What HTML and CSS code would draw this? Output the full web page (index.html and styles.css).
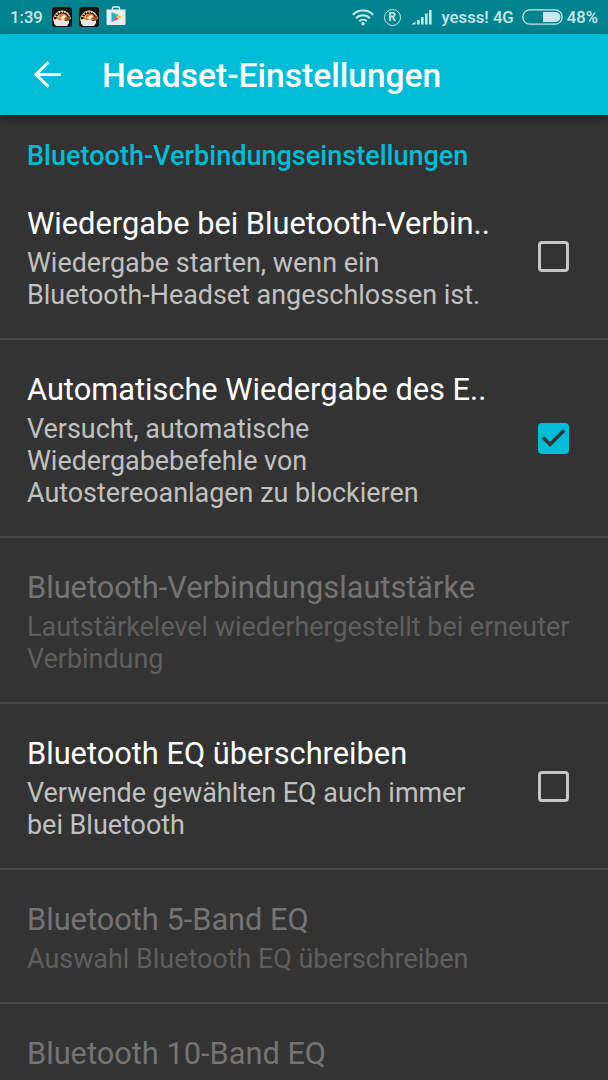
FILE: index.html
```html
<!DOCTYPE html>
<html lang="de">
<head>
  <meta charset="UTF-8">
  <meta name="viewport" content="width=device-width, initial-scale=1.0">
  <title>Headset-Einstellungen</title>
  <link rel="stylesheet" href="styles.css">
</head>
<body>

<svg class="defs" width="0" height="0">
  <symbol id="gauge" viewBox="0 0 20 20">
    <rect width="20" height="20" rx="3" fill="#15110f"/>
    <path d="M1.500 14a8.500 9 0 0 1 17-2" fill="none" stroke="#e0c79a" stroke-width="1"/>
    <path d="M3.500 10a7 6.500 0 0 1 13.500-1" fill="none" stroke="#eee7dc" stroke-width="2" stroke-dasharray="1.300 1.500"/>
    <path d="M4 14c0-5 3-7.500 6.500-7.500S16 9 15.500 12L9 15z" fill="#e97a2c"/>
    <path d="M8 11l4-3 2 1-3 4z" fill="#fff0dc"/>
    <path d="M5 10l2-2v3z" fill="#f9d3ae"/>
    <path d="M2 12.500l3-.5 3 1.500 3-1 3 1.500 3-1v3L15 19H4l-2-2.500z" fill="#e4e8ec"/>
    <path d="M13 11l5-2v4l-3 1z" fill="#8c5737"/>
  </symbol>
</svg>

<header class="status-bar">
  <span class="clock">1:39</span>
  <svg class="app-icon" width="20" height="20"><use href="#gauge"/></svg>
  <svg class="app-icon" width="20" height="20"><use href="#gauge"/></svg>
  <svg class="play-icon" width="20" height="20" viewBox="0 0 20 20">
    <path d="M6.500 4V2q0-1 1-1h5q1 0 1 1v2" fill="none" stroke="#e8eeee" stroke-width="1.400"/>
    <path d="M.5 3.500h19V18q0 1-1 1h-17q-1 0-1-1z" fill="#e8eeee"/>
    <path d="M5.500 6v10l5-5z" fill="#20aee0"/>
    <path d="M5.500 6l5 5 2-2z" fill="#20c58b"/>
    <path d="M5.500 16l5-5 2 2z" fill="#ed4456"/>
    <path d="M10.500 11l2-2 3 2-3 2z" fill="#fbc32c"/>
  </svg>

  <svg class="wifi" width="22" height="17" viewBox="0 0 22 17" fill="none" stroke="#c9e7ea" stroke-width="2">
    <path d="M.8 5.800a14.500 14.500 0 0 1 20.400 0"/>
    <path d="M4 9.200a10 10 0 0 1 14 0"/>
    <path d="M7.200 12.300a5.500 5.500 0 0 1 7.600 0"/>
    <circle cx="11" cy="14.700" r="1.700" fill="#c9e7ea" stroke="none"/>
  </svg>
  <span class="registered">R</span>
  <svg class="signal" width="21" height="16" viewBox="0 0 21 16" fill="#c9e7ea">
    <path d="M0 15.500l4.500-2.700v2.700zM6 11h2.600v4.500H6zM10 8h2.600v7.500H10zM14 4.500h2.600v11H14zM18 1h2.600v14.500H18z"/>
  </svg>
  <span class="carrier">yesss! 4G</span>
  <svg class="battery" width="41" height="16" viewBox="0 0 41 16">
    <rect x=".8" y=".8" width="39.400" height="14.400" rx="7.200" fill="none" stroke="#c9e7ea" stroke-width="1.300"/>
    <path d="M21 3h12.500a5 5 0 0 1 0 10H21z" fill="#c9e7ea"/>
  </svg>
  <span class="percent">48%</span>
</header>

<nav class="toolbar">
  <svg class="back" width="28" height="28" viewBox="0 0 28 28" fill="none" stroke="#fff" stroke-width="3">
    <path d="M28 13.500H3M15.500 1.300L3 13.500l12.500 12.200"/>
  </svg>
  <h1>Headset-Einstellungen</h1>
</nav>

<main class="settings">
  <h2>Bluetooth-Verbindungseinstellungen</h2>

  <section class="item">
    <div class="text">
      <h3>Wiedergabe bei Bluetooth-Verbin..</h3>
      <p>Wiedergabe starten, wenn ein<br>Bluetooth-Headset angeschlossen ist.</p>
    </div>
    <span class="checkbox"></span>
  </section>

  <section class="item">
    <div class="text">
      <h3>Automatische Wiedergabe des E..</h3>
      <p>Versucht, automatische<br>Wiedergabebefehle von<br>Autostereoanlagen zu blockieren</p>
    </div>
    <span class="checkbox checked">
      <svg width="31" height="31" viewBox="0 0 31 31"><path d="M5 14.500l7 7L26 7.500" fill="none" stroke="#333" stroke-width="3.400"/></svg>
    </span>
  </section>

  <section class="item disabled">
    <div class="text">
      <h3>Bluetooth-Verbindungslautstärke</h3>
      <p>Lautstärkelevel wiederhergestellt bei erneuter<br>Verbindung</p>
    </div>
  </section>

  <section class="item">
    <div class="text">
      <h3>Bluetooth EQ überschreiben</h3>
      <p>Verwende gewählten EQ auch immer<br>bei Bluetooth</p>
    </div>
    <span class="checkbox"></span>
  </section>

  <section class="item disabled">
    <div class="text">
      <h3>Bluetooth 5-Band EQ</h3>
      <p>Auswahl Bluetooth EQ überschreiben</p>
    </div>
  </section>

  <section class="item disabled last">
    <div class="text">
      <h3>Bluetooth 10-Band EQ</h3>
    </div>
  </section>
</main>

</body>
</html>
```
FILE: styles.css
```css
* {
  box-sizing: border-box;
}

body {
  margin: 0;
  height: 1080px;
  overflow: hidden;
  display: flex;
  flex-direction: column;
  background-color: #333;
  color: white;
  font-family: Roboto, sans-serif;
}

h1, h2, h3, p {
  margin: 0;
}

.defs {
  display: none;
}

.status-bar {
  display: flex;
  flex: none;
  align-items: center;
  height: 34px;
  padding: 0 10px;
  background-color: #00838f;
  color: #c9e7ea;
  font-size: 16.7px;
  font-weight: 500;
  white-space: nowrap;
}

.clock {
  width: 42px;
}

.app-icon {
  margin-right: 7px;
}

.play-icon {
  margin-top: -2px;
}

.wifi {
  margin-left: auto;
}

.registered {
  width: 17px;
  height: 17px;
  margin-left: 10px;
  border: 1.5px solid #c9e7ea;
  border-radius: 50%;
  font-size: 12px;
  font-weight: 700;
  line-height: 15px;
  text-align: center;
}

.signal {
  margin-left: 10px;
}

.carrier {
  margin-left: 10px;
}

.battery {
  margin-left: 8px;
}

.percent {
  margin-left: 4px;
}

.toolbar {
  display: flex;
  flex: none;
  align-items: center;
  height: 81px;
  padding-left: 33px;
  background-color: #00bcd6;
  box-shadow: 0 3px 9px rgba(0, 0, 0, 0.4);
  z-index: 1;
}

.toolbar h1 {
  margin-left: 41px;
  padding-top: 2px;
  font-size: 33.55px;
  font-weight: 500;
}

.settings h2 {
  height: 59px;
  padding: 25px 27px 0;
  color: #00bcd6;
  font-size: 27.05px;
  font-weight: 500;
  line-height: 32px;
}

.item {
  display: flex;
  align-items: center;
  padding: 32px 39px 27px 27px;
  border-bottom: 2px solid #484848;
}

.last {
  border-bottom: none;
  padding-bottom: 0;
}

.text {
  flex: 1;
  white-space: nowrap;
}

.item h3 {
  margin-bottom: 5px;
  font-size: 30.77px;
  font-weight: 400;
  line-height: 36px;
}

.item p {
  color: #c1c1c1;
  font-size: 26.92px;
  line-height: 32px;
}

.disabled h3 {
  color: #747474;
}

.disabled p {
  color: #5f5f5f;
}

.checkbox {
  width: 31px;
  height: 31px;
  margin-top: -5px;
  border: 3.5px solid #c6c6c6;
  border-radius: 4px;
}

.checked {
  border: none;
  background-color: #00bcd6;
}

.checked svg {
  display: block;
}
```
